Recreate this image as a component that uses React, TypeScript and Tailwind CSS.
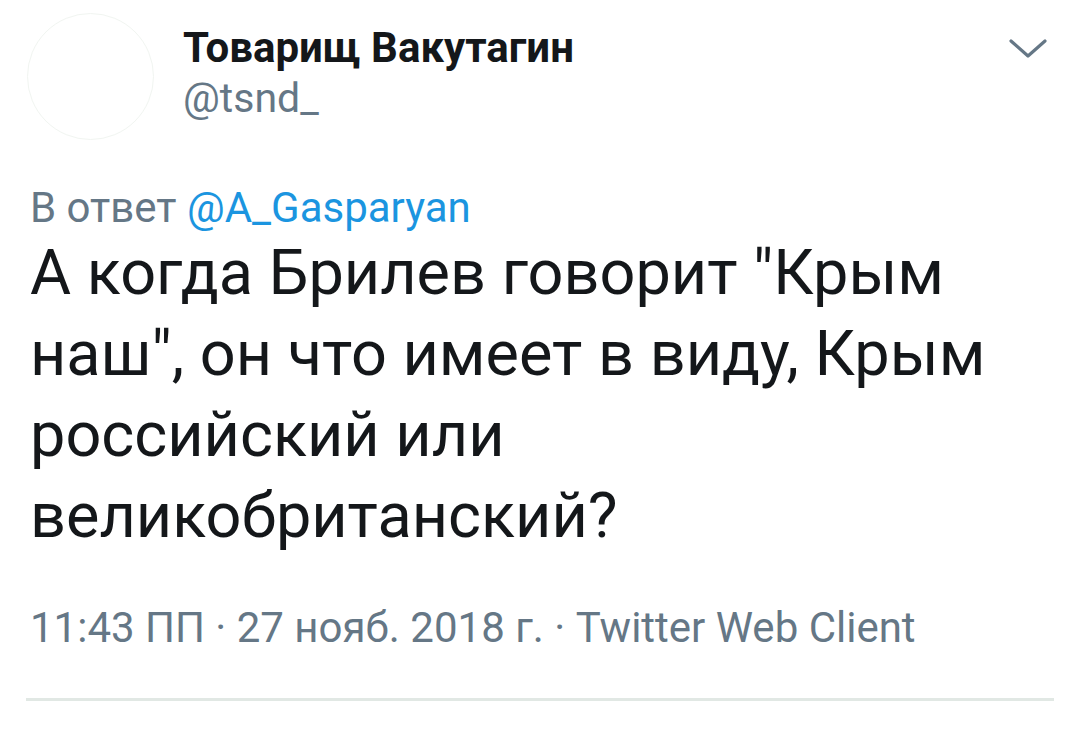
import React from 'react';

const font = { fontFamily: 'Roboto, "Noto Sans", sans-serif' };

export default function App() {
  return (
    <div className="w-[1080px] h-[733px] bg-white overflow-hidden text-[#14171a]" style={font}>
      <div className="flex items-start pl-[27px] pr-[30px] pt-[13px]">
        <div className="w-[127px] h-[127px] rounded-full border border-[#f1f5f1] shrink-0" />
        <div className="ml-[29px] flex-1 pt-[11px]">
          <div className="text-[42px] leading-[48px] font-bold">Товарищ Вакутагин</div>
          <div className="text-[41px] leading-[48px] text-[#657786] mt-[2px]">@tsnd_</div>
        </div>
        <svg width="40" height="24" viewBox="0 0 40 24" className="mt-[24px] mr-[2px]" fill="none">
          <path d="M3 4 L20 19 L37 4" stroke="#657786" strokeWidth="3.2" strokeLinecap="round" strokeLinejoin="round" />
        </svg>
      </div>
      <div className="px-[30px] pt-[44px]">
        <div className="text-[42px] leading-[48px] text-[#657786]">
          В ответ <span className="text-[#1b95e0]">@A_Gasparyan</span>
        </div>
        <div className="text-[63px] leading-[81px] max-w-[1020px]">
          А когда Брилев говорит "Крым наш", он что имеет в виду, Крым российский или великобританский?
        </div>
        <div className="text-[42px] leading-[48px] text-[#657786] mt-[48px]">
          11:43 ПП · 27 нояб. 2018 г. · Twitter Web Client
        </div>
      </div>
      <div className="mx-[26px] mt-[46px] h-[3px] bg-[#e1e8e4]" />
    </div>
  );
}
